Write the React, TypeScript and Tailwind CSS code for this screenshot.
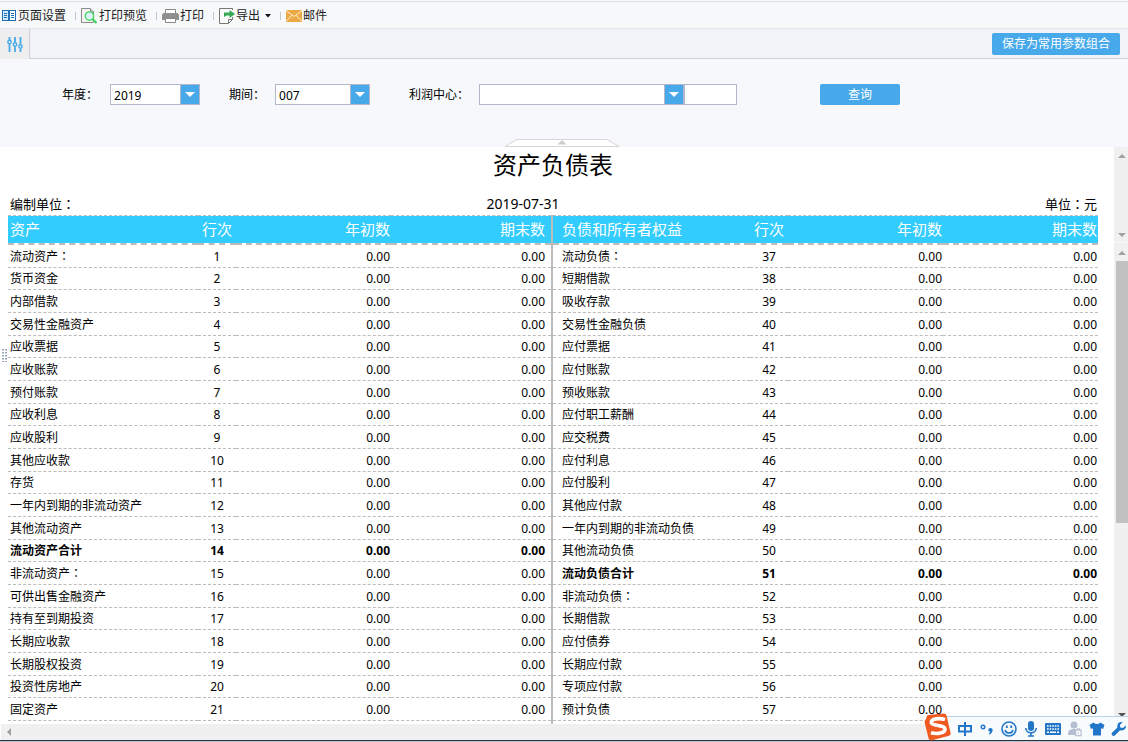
import React from "react";

type Row = { name: string; no: number; bold?: boolean };

const assets: Row[] = [
  "流动资产：", "货币资金", "内部借款", "交易性金融资产", "应收票据", "应收账款", "预付账款",
  "应收利息", "应收股利", "其他应收款", "存货", "一年内到期的非流动资产", "其他流动资产",
  "流动资产合计", "非流动资产：", "可供出售金融资产", "持有至到期投资", "长期应收款",
  "长期股权投资", "投资性房地产", "固定资产",
].map((name, i) => ({ name, no: i + 1, bold: i === 13 }));

const liabilities: Row[] = [
  "流动负债：", "短期借款", "吸收存款", "交易性金融负债", "应付票据", "应付账款", "预收账款",
  "应付职工薪酬", "应交税费", "应付利息", "应付股利", "其他应付款", "一年内到期的非流动负债",
  "其他流动负债", "流动负债合计", "非流动负债：", "长期借款", "应付债券", "长期应付款",
  "专项应付款", "预计负债",
].map((name, i) => ({ name, no: i + 37, bold: i === 14 }));

/* Sets the full-width colon in the middle of its cell. */
function Text({ children }: { children: string }) {
  return (
    <>
      {children.split(/(：)/).map((part, i) =>
        part === "：" ? (
          <span key={i} className="font-['Noto_Sans_CJK_TC',sans-serif]">：</span>
        ) : (
          part
        ),
      )}
    </>
  );
}

function Separator() {
  return <span className="mr-[5px] ml-[9px] h-2 w-px bg-[#c4c6ca]" />;
}

function ToolButton({ icon, label, caret }: { icon: React.ReactNode; label: string; caret?: boolean }) {
  return (
    <button type="button" className="flex items-center gap-px whitespace-nowrap text-[#222]">
      {icon}
      {label}
      {caret && (
        <svg width="6" height="4" viewBox="0 0 6 4" className="ml-1">
          <path d="M0 0h6L3 3.5z" fill="#111" />
        </svg>
      )}
    </button>
  );
}

const PageIcon = (
  <svg width="16" height="16" viewBox="0 0 16 16" fill="none">
    <rect x="1.500" y="2.500" width="13" height="10" fill="#fff" stroke="#1e6fb8" />
    <rect x="2" y="3" width="5" height="9" fill="#cfe8fb" />
    <path d="M8 2v11" stroke="#1e6fb8" strokeWidth="2" />
    <path d="M3 5.500h3M3 7.500h3M3 9.500h3M10 5.500h3M10 7.500h3M10 9.500h3" stroke="#1e6fb8" />
  </svg>
);
const PreviewIcon = (
  <svg width="17" height="16" viewBox="0 0 17 16" fill="none">
    <path d="M.5.500H9L12.500 4v10.500H.5z" fill="#f4f4f4" stroke="#8a8a8a" />
    <path d="M9.500.500V4H13" stroke="#8a8a8a" />
    <circle cx="8.500" cy="8" r="4.200" fill="#d9f2f8" stroke="#3fd25c" strokeWidth="1.300" />
    <path d="M11.500 11l4 4" stroke="#3fd25c" strokeWidth="2.200" />
  </svg>
);
const PrintIcon = (
  <svg width="17" height="16" viewBox="0 0 17 16" fill="none">
    <path d="M3.500 5V1.500h10V5" fill="#fff" stroke="#888" />
    <path d="M1.500 5h14l1.500 1.500V12H0V6.500z" fill="#8f8f8f" />
    <path d="M3.500 10.500h10v4h-10z" fill="#fff" stroke="#888" />
  </svg>
);
const ExportIcon = (
  <svg width="16" height="16" viewBox="0 0 16 16" fill="none">
    <path d="M13.500 9v2.500l-4 4H.5V.500h13V2" fill="#fbfbfb" stroke="#777" />
    <path d="M9.500 15v-3.500h4" stroke="#777" />
    <path d="M5 9V4.500h5.500V2L16 6l-5.500 4V7.500H7.500L5 9z" fill="#35a854" />
  </svg>
);
const MailIcon = (
  <svg width="16" height="12" viewBox="0 0 16 12" fill="none">
    <rect width="16" height="12" fill="#eda945" />
    <path d="M0 .5l8 6 8-6M0 11.500l5.800-6.200M16 11.500l-5.800-6.200" stroke="#fff0cf" />
  </svg>
);

function Combo({ id, value, className }: { id: string; value: string; className: string }) {
  return (
    <div className={`relative h-[21px] ${className}`}>
      <select
        id={id}
        defaultValue={value}
        className="block h-full w-full appearance-none border border-[#b4b6cb] bg-white pt-0.5 pl-[3px] text-black outline-none"
      >
        <option value={value}>{value}</option>
      </select>
      <span className="pointer-events-none absolute top-0 right-0 flex h-full w-5 items-center justify-center border border-[#b4b6cb] bg-[#48a9ea]">
        <svg width="10" height="5" viewBox="0 0 10 5">
          <path d="M0 0h10L5 5z" fill="#fff" />
        </svg>
      </span>
    </div>
  );
}

function Sheet({ rows, title, side }: { rows: Row[]; title: string; side: "left" | "right" }) {
  const first = side === "left" ? "pl-0.5" : "pl-[9px]";
  const last = side === "left" ? "pr-1.5" : "pr-px";
  const head = "h-[30px] border-t border-b-2 border-dashed border-[#bcbcbc] bg-[#33ccff] bg-clip-padding pt-0 pb-0.5 font-normal";
  return (
    <table className="w-full table-fixed border-separate border-spacing-0 self-start whitespace-nowrap">
      <colgroup>
        <col />
        <col className="w-[38px]" />
        <col className="w-[155px]" />
        <col className={side === "left" ? "w-[160px]" : "w-[155px]"} />
      </colgroup>
      <thead>
        <tr className="text-[15px] leading-5 text-white">
          <th className={`${head} ${first} text-left`}>{title}</th>
          <th className={`${head} px-0 text-center`}>行次</th>
          <th className={`${head} pr-px pl-0 text-right`}>年初数</th>
          <th className={`${head} ${last} pl-0 text-right`}>期末数</th>
        </tr>
      </thead>
      <tbody>
        {rows.map((r, i) => {
          const cell = `${i % 3 === 1 ? "h-[22px]" : "h-[23px]"} border-b border-dashed border-[#bcbcbc] pt-px pb-0`;
          return (
            <tr key={r.no} className={`leading-5 ${r.bold ? "font-bold" : ""}`}>
              <td className={`${cell} ${first}`}><Text>{r.name}</Text></td>
              <td className={`${cell} px-0 text-center`}>{r.no}</td>
              <td className={`${cell} pr-px pl-0 text-right`}>0.00</td>
              <td className={`${cell} ${last} pl-0 text-right`}>0.00</td>
            </tr>
          );
        })}
      </tbody>
    </table>
  );
}

function Arrow({ dir, dark }: { dir: "up" | "down" | "left"; dark?: boolean }) {
  const d = dir === "up" ? "M0 6L4 2l4 4z" : dir === "down" ? "M0 2h8L4 6z" : "M6 0v8L2 4z";
  return (
    <svg width="8" height="8" viewBox="0 0 8 8" className="shrink-0">
      <path d={d} fill={dark ? "#555" : "#a0a0a0"} />
    </svg>
  );
}

function InputMethodBar() {
  const blue = "#2176c7";
  return (
    <div className="absolute right-0 bottom-0.5 flex h-6 items-center gap-[6px] border-t border-[#b9d3e6] bg-[#f8fbfe] pr-px">
      <svg width="29" height="28" viewBox="0 0 29 28" className="-mt-1 -mr-px -ml-2 shrink-0">
        <path d="M3.500 4.500Q3.300 2.500 5.200 2.100L20.500.4Q23 .2 23.500 2.500L27.600 20Q28 22 26 22.700L9 27.300Q6.500 27.800 5.600 25.500L1.500 9z" fill="#ee5a20" />
        <path d="M22 6.700C17 4.700 8 5.500 8.300 9.500c.4 4 13.500 2 13.700 6.500.2 4.200-8 5.500-14 3.800" fill="none" stroke="#fff" strokeWidth="3.600" />
      </svg>
      <svg width="16" height="16" viewBox="0 0 16 16" fill="none" stroke={blue} strokeWidth="2">
        <path d="M2 5h12v5.500H2zM8 1v14" />
      </svg>
      <svg width="16" height="16" viewBox="0 0 14 16" fill="none">
        <circle cx="3" cy="6" r="1.800" stroke={blue} strokeWidth="1.400" />
        <path d="M10.500 7c1.600 0 2.500 1.200 2 2.900-.4 1.600-1.500 2.800-3.200 3.600l-.5-1c.8-.5 1.200-1 1.300-1.700-2.600-.3-2.200-3.800.4-3.800z" fill={blue} />
      </svg>
      <svg width="16" height="16" viewBox="0 0 16 16" fill="none" stroke={blue} strokeWidth="1.600">
        <circle cx="8" cy="8" r="7" />
        <path d="M4 9c1 4 7 4 8 0" />
        <path d="M5.800 4.500v2.500M10.200 4.500v2.500" strokeWidth="1.800" />
      </svg>
      <svg width="16" height="16" viewBox="0 0 16 16" fill="none">
        <rect x="5" y="0" width="6" height="10" rx="3" fill={blue} />
        <path d="M2.800 7c0 6.500 10.400 6.500 10.400 0M8 11.500V15M5 15h6" stroke={blue} strokeWidth="1.600" />
      </svg>
      <svg width="16" height="16" viewBox="0 0 16 16">
        <rect x="0" y="2" width="16" height="12" rx="1" fill={blue} />
        <path d="M2 5h12M2 8h12" stroke="#fff" strokeWidth="1.600" strokeDasharray="1.600 1" />
        <path d="M2 11.200h2M5 11.200h6M12 11.200h2" stroke="#fff" strokeWidth="1.400" />
      </svg>
      <svg width="16" height="16" viewBox="0 0 16 16">
        <circle cx="7" cy="4" r="3.500" fill="#b5bdd0" />
        <path d="M1 14c0-4 1.500-6 5.500-6 1.600 0 2 .4 2.500.8V14z" fill="#b5bdd0" />
        <rect x="8.600" y="9.200" width="5.500" height="5.500" fill="#fff" stroke="#b5bdd0" strokeWidth="1.200" />
        <path d="M10 9V7.800h2.800V9M11.300 11v2" fill="none" stroke="#b5bdd0" />
      </svg>
      <svg width="16" height="16" viewBox="0 0 16 16">
        <path d="M4.500 1.500Q8 4.500 11.500 1.500L15.500 4 14 8l-2-.7V14.500H4V7.300L2 8 .5 4z" fill={blue} />
      </svg>
      <svg width="16" height="16" viewBox="0 0 16 16">
        <path d="M14.800 4.400L12 7 9.300 6.500 8.900 4 11.600 1.200C9 .2 5.500 2.200 6.400 6.400L.8 12c-1 1.300 1.200 3.800 2.700 2.700L9.100 9.200c4 1.100 6.600-2 5.700-4.800z" fill={blue} />
      </svg>
    </div>
  );
}

export default function App() {
  return (
    <div className="relative overflow-hidden bg-white font-['Noto_Sans','Noto_Sans_CJK_SC',sans-serif] text-[12px] leading-4 text-black">
      <div className="h-0.5 border-b border-[#dcdfe4] bg-[#f6f7fa]" />
      <div className="flex h-[27px] items-center border-b border-[#e4e6ec] bg-[#f7f8fa] pt-px pl-px">
        <ToolButton icon={PageIcon} label="页面设置" />
        <Separator />
        <ToolButton icon={PreviewIcon} label="打印预览" />
        <Separator />
        <ToolButton icon={PrintIcon} label="打印" />
        <Separator />
        <ToolButton icon={ExportIcon} label="导出" caret />
        <Separator />
        <ToolButton icon={MailIcon} label="邮件" />
      </div>

      <div className="flex h-[30px] items-center border-b border-[#cdd0d8] bg-[#f2f3f8]">
        <button type="button" aria-label="参数" className="flex h-[30px] w-[30px] items-center justify-center border-r border-[#cdd0d8] bg-[#eee] pt-0.5">
          <svg width="16" height="17" viewBox="0 0 16 17" fill="none" stroke="#48a9ea" strokeWidth="1.800">
            <path d="M2.500 1v3M2.500 8v8M8 1v5M8 11v5M13.500 1v7M13.500 13v3" />
            <circle cx="2.500" cy="6" r="1.700" strokeWidth="1.400" />
            <circle cx="8" cy="8.500" r="1.700" strokeWidth="1.400" />
            <circle cx="13.500" cy="10.500" r="1.700" strokeWidth="1.400" />
          </svg>
        </button>
        <button type="button" className="mr-2 ml-auto h-[22px] w-32 rounded-xs bg-[#48a9ea] text-white">
          保存为常用参数组合
        </button>
      </div>

      <form className="flex h-[88px] flex-col bg-[#f7f8fb]">
        <div className="flex items-center pt-[25px] pl-[62px] whitespace-nowrap">
          <label htmlFor="year" className="mr-3">年度：</label>
          <Combo id="year" value="2019" className="w-[90px]" />
          <label htmlFor="period" className="mr-[10px] ml-[29px]">期间：</label>
          <Combo id="period" value="007" className="w-[95px]" />
          <label htmlFor="center" className="mr-[10px] ml-[39px]">利润中心：</label>
          <Combo id="center" value="" className="w-[205px]" />
          <input aria-label="利润中心名称" className="h-[21px] w-[53px] border border-[#b4b6cb] bg-white" />
          <button type="button" className="ml-[83px] h-[21px] w-20 rounded-xs bg-[#48a9ea] text-white">查询</button>
        </div>
        <button type="button" aria-label="收起" className="mt-auto self-center pr-1">
          <svg width="114" height="8" viewBox="0 0 114 8" className="block">
            <path d="M0 7.500L12 .5h90l12 7z" fill="#fff" stroke="#d6d6d6" />
            <path d="M52.500 5.500h9L57 1z" fill="#ccc" />
          </svg>
        </button>
      </form>

      <main className="relative flex">
        <div className="min-w-0 flex-1 pr-4 pl-2">
          <h1 className="text-center text-[24px] leading-9">资产负债表</h1>
          <div className="grid h-8 grid-cols-3 content-end text-[13px] leading-[22px]">
            <span className="pl-0.5"><Text>编制单位：</Text></span>
            <span className="pr-[60px] text-center text-[14px]">2019-07-31</span>
            <span className="pr-px text-right"><Text>单位：元</Text></span>
          </div>
          <div className="grid grid-cols-[543fr_2px_545fr]">
            <Sheet rows={assets} title="资产" side="left" />
            <div className="-mb-[3px] bg-[#bcbcbc]" />
            <Sheet rows={liabilities} title="负债和所有者权益" side="right" />
          </div>
          <div className="h-[3px]" />
        </div>
        <div className="flex w-3.5 flex-col bg-[#f0f0f0]">
          <div className="flex h-[95px] flex-col items-center justify-between pt-[5px] pb-[3px] pl-0.5">
            <Arrow dir="up" />
            <Arrow dir="down" />
          </div>
          <div className="flex flex-1 flex-col items-center border-t border-[#f8f8f8] pt-1.5 pb-[5px] pl-0.5">
            <Arrow dir="up" />
            <div className="mt-1 h-[262px] w-full bg-[#c1c1c1]" />
            <div className="mt-auto"><Arrow dir="down" dark /></div>
          </div>
        </div>
        <svg width="5" height="13" viewBox="0 0 5 13" className="absolute top-[202px] left-0.5">
          <path d="M1 0v13M4 0v13" stroke="#7b8aa5" strokeWidth="1.500" strokeDasharray="1.500 1.500" />
        </svg>
      </main>

      <div className="ml-px flex h-4 items-center bg-[#f0f0f0] pl-1">
        <Arrow dir="left" />
      </div>
      <div className="h-0.5 border-t border-[#27303c] bg-[#b9c6d2]" />
      <InputMethodBar />
    </div>
  );
}
